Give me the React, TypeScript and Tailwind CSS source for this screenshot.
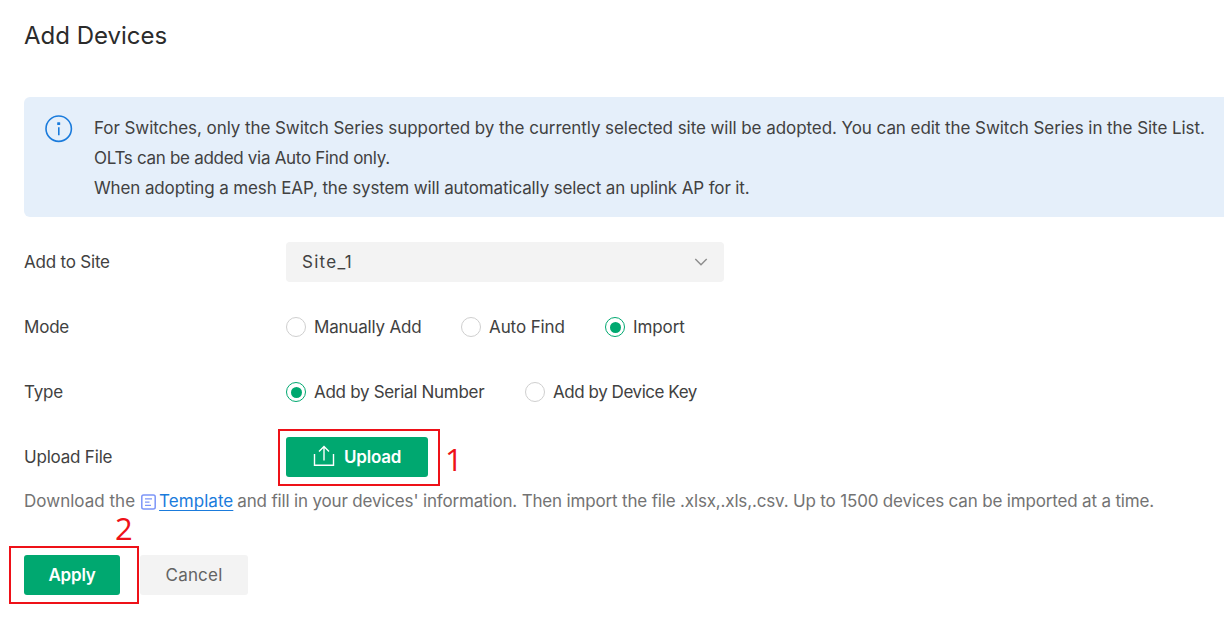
import { useState } from 'react';
import clsx from 'clsx';

const MODES = [
  { id: 'manual', label: 'Manually Add', className: 'w-[175px] tracking-[-0.2px]' },
  { id: 'auto', label: 'Auto Find', className: 'w-36 tracking-[-0.1px]' },
  { id: 'import', label: 'Import', className: 'tracking-[-0.1px]' },
];

const TYPES = [
  { id: 'serial', label: 'Add by Serial Number', className: 'w-[239px] tracking-[-0.3px]' },
  { id: 'key', label: 'Add by Device Key', className: 'tracking-[-0.45px]' },
];

function InfoIcon() {
  return (
    <svg className="h-7 w-7 shrink-0" viewBox="0 0 28 28" fill="none">
      <circle cx="13.7" cy="13.7" r="12.7" stroke="#1a7bdc" strokeWidth="1.6" />
      <rect x="12.2" y="7.3" width="3" height="2.8" rx="0.5" fill="#1a7bdc" />
      <path d="M13.8 12.2v8" stroke="#1a7bdc" strokeWidth="1.6" />
    </svg>
  );
}

function UploadIcon() {
  return (
    <svg className="mb-0.5 h-[22px] w-[22px]" viewBox="0 0 22 22" fill="none" stroke="white" strokeWidth="1.4">
      <path d="M1.5 9v11.3h19V9" />
      <path d="M11 15.5V1.8M6 6.6l5-5 5 5" />
    </svg>
  );
}

function TemplateIcon() {
  return (
    <svg className="h-4 w-[15px] shrink-0" viewBox="0 0 15 16" fill="none" stroke="#7c95f8">
      <rect x="0.8" y="1" width="13.4" height="14" rx="1.8" strokeWidth="1.5" />
      <path d="M4 4.8h7M4 8.1h4.5M4 11.4h6" strokeWidth="1.3" />
    </svg>
  );
}

function RadioGroup({ options, value, onChange }: any) {
  return (
    <div className="flex">
      {options.map((option: any) => (
        <button
          key={option.id}
          onClick={() => onChange(option.id)}
          className={clsx('flex items-center gap-2 whitespace-nowrap', option.className)}
        >
          <span
            className={clsx(
              'flex h-5 w-5 shrink-0 items-center justify-center rounded-full border',
              value === option.id ? 'border-[#00a870]' : 'border-[#cfcfcf]'
            )}
          >
            {value === option.id && <span className="h-[11px] w-[11px] shrink-0 rounded-full bg-[#00a870]" />}
          </span>
          <span className="pt-0.5">{option.label}</span>
        </button>
      ))}
    </div>
  );
}

function FormRow({ label, children }: any) {
  return (
    <div className="flex h-10 items-center">
      <div className="w-[262px] shrink-0 pt-0.5">{label}</div>
      {children}
    </div>
  );
}

export default function App() {
  const [mode, setMode] = useState('import');
  const [type, setType] = useState('serial');

  return (
    <div className="h-[626px] overflow-hidden bg-white pl-6 font-['Inter',sans-serif] text-[17px] tracking-[-0.2px] text-[#414141]">
      <h1 className="pt-[18px] text-2xl leading-9 tracking-normal text-[#2b2b2b]">Add Devices</h1>

      {/* Notice */}
      <div className="mt-[43px] flex h-[120px] rounded-l-md bg-[#e5effa] pt-4 pl-[21px]">
        <div className="pt-0.5">
          <InfoIcon />
        </div>
        <div className="ml-[21px] leading-[30px] whitespace-nowrap">
          <p className="tracking-[-0.063px]">
            For Switches, only the Switch Series supported by the currently selected site will be adopted. You can edit the Switch Series in the Site List.
          </p>
          <p className="tracking-[-0.3px]">OLTs can be added via Auto Find only.</p>
          <p className="tracking-[-0.13px]">When adopting a mesh EAP, the system will automatically select an uplink AP for it.</p>
        </div>
      </div>

      {/* Form */}
      <div className="mt-[25px] flex flex-col gap-[25px]">
        <FormRow label="Add to Site">
          <button className="flex h-10 w-[438px] items-center justify-between rounded bg-[#f3f3f3] px-4">
            <span className="pt-0.5 tracking-[1.3px]">Site_1</span>
            <svg className="h-3 w-3.5" viewBox="0 0 14 12" fill="none" stroke="#8c8c8c" strokeWidth="1.4">
              <path d="M1.3 3l5.7 5.7L12.7 3" />
            </svg>
          </button>
        </FormRow>
        <FormRow label="Mode">
          <RadioGroup options={MODES} value={mode} onChange={setMode} />
        </FormRow>
        <FormRow label="Type">
          <RadioGroup options={TYPES} value={type} onChange={setType} />
        </FormRow>
        <FormRow label="Upload File">
          <div className="relative">
            <button className="flex h-10 w-[142px] items-center gap-[9px] rounded-[3px] bg-[#00a870] pl-[27px] font-semibold text-white">
              <UploadIcon />
              <span className="pt-0.5">Upload</span>
            </button>
            <div className="pointer-events-none absolute -top-2 -left-2 h-[57px] w-[162px] border-2 border-[#ee1118]" />
            <span className="absolute top-2.5 left-[159px] font-['Open_Sans',sans-serif] text-[31px] leading-6 tracking-normal text-[#ee1118]">1</span>
          </div>
        </FormRow>
      </div>

      <div className="mt-2.5 flex h-[30px] items-center whitespace-nowrap text-[#737373]">
        <span className="tracking-[0.02px]">Download the</span>
        <span className="ml-1.5 flex items-center gap-[3px] text-[#1a7bdc]">
          <TemplateIcon />
          <span className="tracking-[0.05px] underline underline-offset-[3px]">Template</span>
        </span>
        <span className="ml-1 tracking-[-0.165px]">
          and fill in your devices' information. Then import the file .xlsx,.xls,.csv. Up to 1500 devices can be imported at a time.
        </span>
      </div>

      {/* Actions */}
      <div className="relative mt-[38px] flex gap-5">
        <button className="h-10 w-24 rounded-[3px] bg-[#00a870] pt-0.5 font-semibold text-white">Apply</button>
        <button className="h-10 w-[108px] rounded-[3px] bg-[#f3f3f3] pt-0.5 tracking-[0.2px] text-[#636363]">Cancel</button>
        <div className="pointer-events-none absolute -top-[9px] -left-[15px] h-[58px] w-[130px] border-2 border-[#ee1118]" />
        <span className="absolute -top-[39px] left-[91px] font-['Open_Sans',sans-serif] text-[31px] leading-6 tracking-normal text-[#ee1118]">2</span>
      </div>
    </div>
  );
}
